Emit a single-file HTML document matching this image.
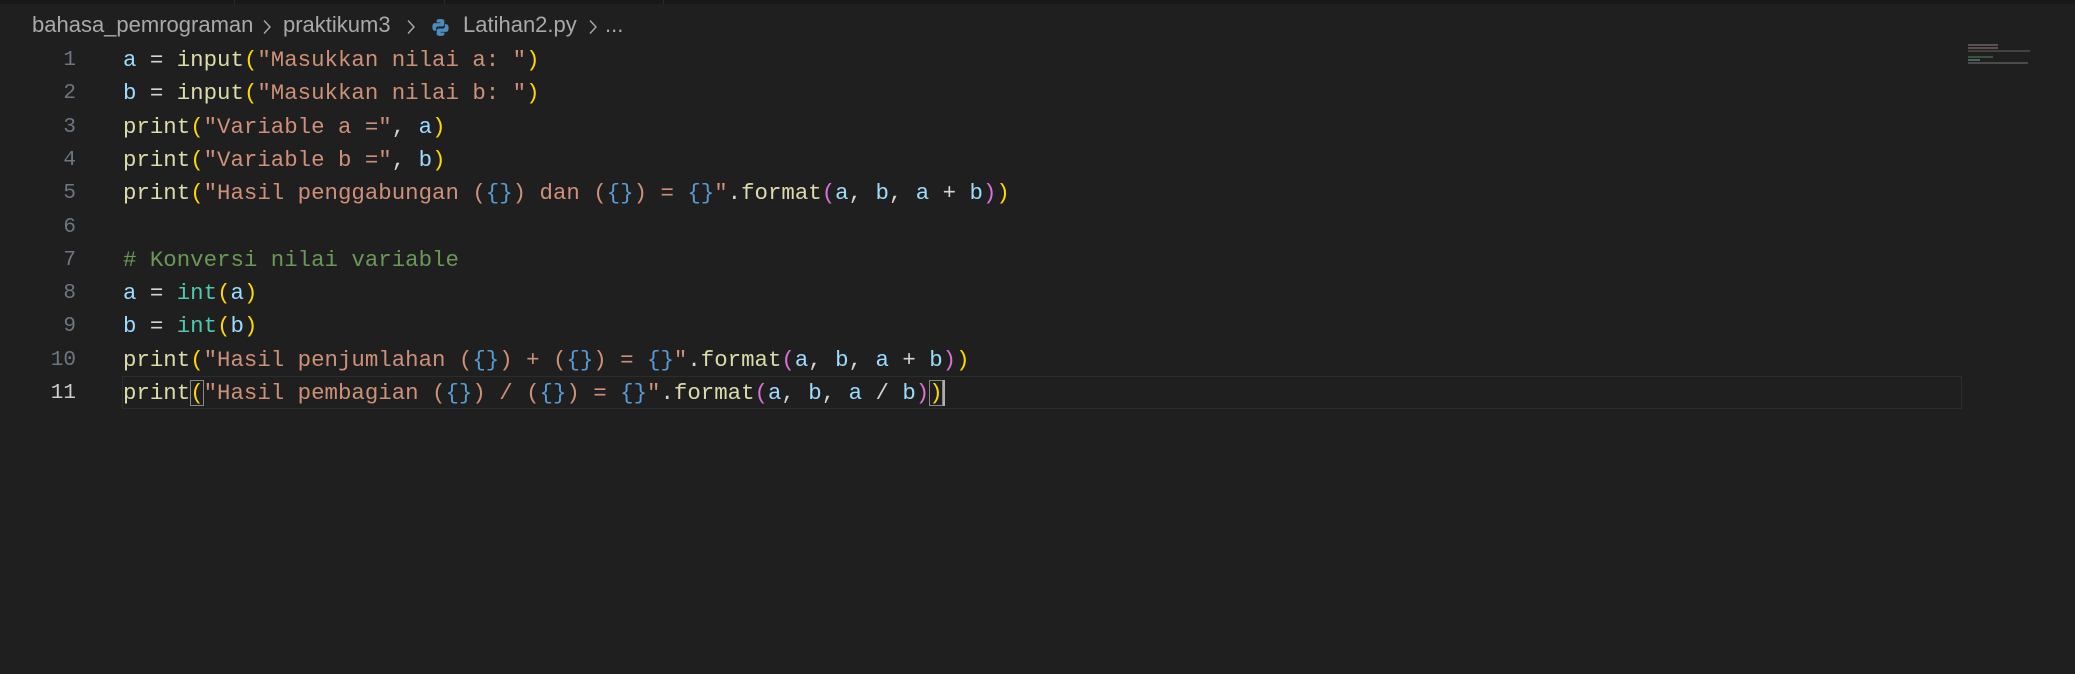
<!DOCTYPE html>
<html><head><style>
body{margin:0;width:2075px;height:674px;background:#1f1f1f;overflow:hidden;position:relative;font-family:"Liberation Mono",monospace}
.top{position:absolute;left:0;top:0;width:2075px;height:4px;background:#181818}
.sep{position:absolute;top:0;width:1px;height:4px;background:#2b2b2b}
.bc{position:absolute;top:10px;left:0;height:30px;line-height:30px;font-family:"Liberation Sans",sans-serif;font-size:22px;color:#a9a9a9;white-space:nowrap}
.bc span{position:absolute;top:0}
.bc svg.ch{position:absolute;top:9px}
.ln{position:absolute;left:0;width:76px;text-align:right;font-size:21px;color:#6e7681;height:33.3px;line-height:33.3px}
.code{position:absolute;left:123px;font-size:22.4px;height:33.3px;line-height:33.3px;white-space:pre;color:#d4d4d4}
.cur{position:absolute;left:122px;top:376px;width:1838px;height:31px;border:1px solid #2c2c2c}
.v{color:#9cdcfe}.f{color:#dcdcaa}.s{color:#ce9178}.y{color:#ffd700}.m{color:#da70d6}.b{color:#569cd6}.t{color:#4ec9b0}.c{color:#6a9955}
.bx{outline:1px solid #888;outline-offset:-1px}
</style></head><body>
<div class="top"></div>
<div class="sep" style="left:234px"></div><div class="sep" style="left:444px"></div><div class="sep" style="left:663px"></div>
<div class="bc">
<span style="left:32px">bahasa_pemrograman</span>
<svg class="ch" style="left:262px" width="10" height="16" viewBox="0 0 10 16"><path d="M2 1.5l6 6.5-6 6.5" fill="none" stroke="#a9a9a9" stroke-width="1.4"/></svg>
<span style="left:283px">praktikum3</span>
<svg class="ch" style="left:406px" width="10" height="16" viewBox="0 0 10 16"><path d="M2 1.5l6 6.5-6 6.5" fill="none" stroke="#a9a9a9" stroke-width="1.4"/></svg>
<span style="left:431px;top:5px"><svg width="19" height="19" viewBox="0 0 18 18"><path d="M8.8 1C5 1 5.3 2.6 5.3 2.6v1.7h3.6v.5H3.8S1.3 4.5 1.3 8.4s2.2 3.7 2.2 3.7h1.3v-1.8s-.1-2.2 2.1-2.2h3.6s2.1 0 2.1-2V2.8S12.9 1 8.8 1z" fill="#4b8bbe"/><path d="M9.2 17c3.8 0 3.5-1.6 3.5-1.6v-1.7H9.1v-.5h5.1s2.5.3 2.5-3.6-2.2-3.7-2.2-3.7h-1.3v1.8s.1 2.2-2.1 2.2H7.5s-2.1 0-2.1 2v3.3S5.1 17 9.2 17z" fill="#4b8bbe"/></svg></span>
<span style="left:463px">Latihan2.py</span>
<svg class="ch" style="left:588px" width="10" height="16" viewBox="0 0 10 16"><path d="M2 1.5l6 6.5-6 6.5" fill="none" stroke="#a9a9a9" stroke-width="1.4"/></svg>
<span style="left:605px">...</span>
</div>
<div class="cur"></div>
<div style="position:absolute;left:1968px;top:43px;width:65px;height:22px;opacity:.5">
<div style="height:2px;width:30px;background:#888;margin-top:1px"></div>
<div style="height:2px;width:30px;background:#a77;margin-top:1px"></div>
<div style="height:2px;width:62px;background:#666;margin-top:1px"></div>
<div style="height:2px;width:25px;background:#585;margin-top:4px"></div>
<div style="height:2px;width:12px;background:#6aa;margin-top:1px"></div>
<div style="height:2px;width:60px;background:#777;margin-top:1px"></div>
</div>

<div class="ln" style="top:44px">1</div>
<div class="ln" style="top:77.3px">2</div>
<div class="ln" style="top:110.6px">3</div>
<div class="ln" style="top:143.9px">4</div>
<div class="ln" style="top:177.2px">5</div>
<div class="ln" style="top:210.5px">6</div>
<div class="ln" style="top:243.8px">7</div>
<div class="ln" style="top:277.1px">8</div>
<div class="ln" style="top:310.4px">9</div>
<div class="ln" style="top:343.7px">10</div>
<div class="ln" style="top:377px;color:#cccccc">11</div>

<div class="code" style="top:44px"><span class="v">a</span> = <span class="f">input</span><span class="y">(</span><span class="s">"Masukkan nilai a: "</span><span class="y">)</span></div>
<div class="code" style="top:77.3px"><span class="v">b</span> = <span class="f">input</span><span class="y">(</span><span class="s">"Masukkan nilai b: "</span><span class="y">)</span></div>
<div class="code" style="top:110.6px"><span class="f">print</span><span class="y">(</span><span class="s">"Variable a ="</span>, <span class="v">a</span><span class="y">)</span></div>
<div class="code" style="top:143.9px"><span class="f">print</span><span class="y">(</span><span class="s">"Variable b ="</span>, <span class="v">b</span><span class="y">)</span></div>
<div class="code" style="top:177.2px"><span class="f">print</span><span class="y">(</span><span class="s">"Hasil penggabungan (<span class="b">{}</span>) dan (<span class="b">{}</span>) = <span class="b">{}</span>"</span>.<span class="f">format</span><span class="m">(</span><span class="v">a</span>, <span class="v">b</span>, <span class="v">a</span> + <span class="v">b</span><span class="m">)</span><span class="y">)</span></div>
<div class="code" style="top:243.8px"><span class="c"># Konversi nilai variable</span></div>
<div class="code" style="top:277.1px"><span class="v">a</span> = <span class="t">int</span><span class="y">(</span><span class="v">a</span><span class="y">)</span></div>
<div class="code" style="top:310.4px"><span class="v">b</span> = <span class="t">int</span><span class="y">(</span><span class="v">b</span><span class="y">)</span></div>
<div class="code" style="top:343.7px"><span class="f">print</span><span class="y">(</span><span class="s">"Hasil penjumlahan (<span class="b">{}</span>) + (<span class="b">{}</span>) = <span class="b">{}</span>"</span>.<span class="f">format</span><span class="m">(</span><span class="v">a</span>, <span class="v">b</span>, <span class="v">a</span> + <span class="v">b</span><span class="m">)</span><span class="y">)</span></div>
<div class="code" style="top:377px"><span class="f">print</span><span class="y bx">(</span><span class="s">"Hasil pembagian (<span class="b">{}</span>) / (<span class="b">{}</span>) = <span class="b">{}</span>"</span>.<span class="f">format</span><span class="m">(</span><span class="v">a</span>, <span class="v">b</span>, <span class="v">a</span> / <span class="v">b</span><span class="m">)</span><span class="y bx">)</span><span style="display:inline-block;width:2px;height:26px;background:#aeafad;vertical-align:middle"></span></div>
</body></html>
